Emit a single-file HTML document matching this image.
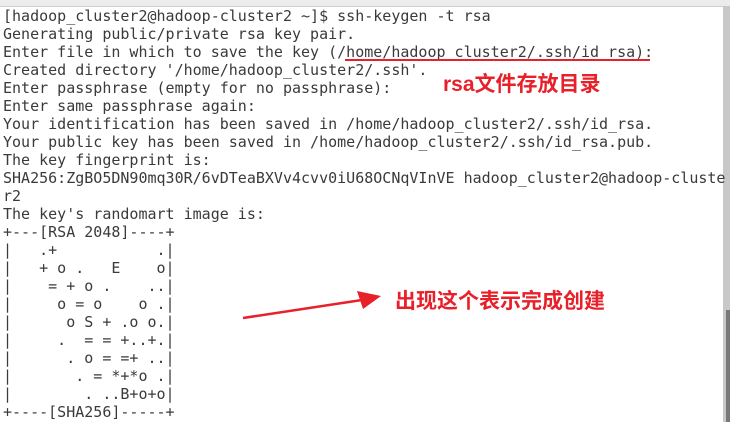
<!DOCTYPE html>
<html><head><meta charset="utf-8"><style>
body{margin:0;width:730px;height:422px;background:#fff;overflow:hidden;position:relative}
.top{position:absolute;left:0;top:0;width:730px;height:6px;background:#ececec;border-bottom:1px solid #cfcfcf}
.sb{position:absolute;left:723px;top:6px;width:7px;height:416px;background:#c8c8c8}
.th{position:absolute;left:726px;top:310px;width:4px;height:112px;background:#787878}
pre{position:absolute;left:3px;top:7px;margin:0;font-family:"DejaVu Sans Mono","Liberation Mono",monospace;font-size:15px;line-height:18px;color:#3a3a3a;letter-spacing:0}
.r{position:absolute;color:#e8202a;font-weight:bold;font-family:"Liberation Sans","Noto Sans CJK SC",sans-serif;white-space:nowrap}
</style></head><body>
<div class="top"></div><div class="sb"></div><div class="th"></div>
<pre>[hadoop_cluster2@hadoop-cluster2 ~]$ ssh-keygen -t rsa
Generating public/private rsa key pair.
Enter file in which to save the key (/home/hadoop_cluster2/.ssh/id_rsa):
Created directory '/home/hadoop_cluster2/.ssh'.
Enter passphrase (empty for no passphrase):
Enter same passphrase again:
Your identification has been saved in /home/hadoop_cluster2/.ssh/id_rsa.
Your public key has been saved in /home/hadoop_cluster2/.ssh/id_rsa.pub.
The key fingerprint is:
SHA256:ZgBO5DN90mq30R/6vDTeaBXVv4cvv0iU68OCNqVInVE hadoop_cluster2@hadoop-cluste
r2
The key's randomart image is:
+---[RSA 2048]----+
|   .+           .|
|   + o .   E    o|
|    = + o .    ..|
|     o = o    o .|
|      o S + .o o.|
|     .  = = +..+.|
|      . o = =+ ..|
|       . = *+*o .|
|        . ..B+o+o|
+----[SHA256]-----+</pre>
<div style="position:absolute;left:345px;top:59px;width:305px;height:2px;background:#e8202a"></div>
<div class="r" style="left:443px;top:68px;font-size:21px">rsa文件存放目录</div>
<div class="r" style="left:395px;top:285px;font-size:21px">出现这个表示完成创建</div>
<svg style="position:absolute;left:0;top:0" width="730" height="422"><line x1="243" y1="318" x2="362" y2="300" stroke="#e8202a" stroke-width="2.5"/><polygon points="381,296 357,291 363,309" fill="#e8202a"/></svg>
</body></html>
